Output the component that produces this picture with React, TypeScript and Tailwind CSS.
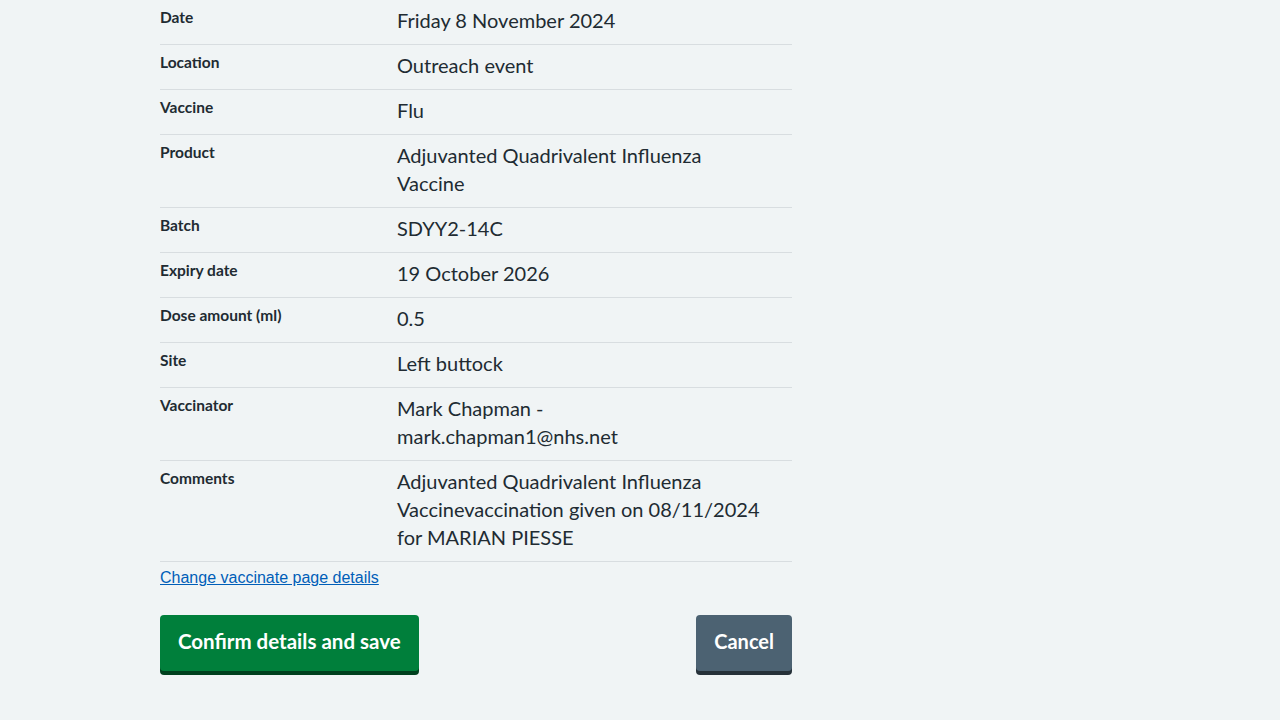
const rows: { key: string; value: string[] }[] = [
  { key: "Date", value: ["Friday 8 November 2024"] },
  { key: "Location", value: ["Outreach event"] },
  { key: "Vaccine", value: ["Flu"] },
  { key: "Product", value: ["Adjuvanted Quadrivalent Influenza", "Vaccine"] },
  { key: "Batch", value: ["SDYY2-14C"] },
  { key: "Expiry date", value: ["19 October 2026"] },
  { key: "Dose amount (ml)", value: ["0.5"] },
  { key: "Site", value: ["Left buttock"] },
  { key: "Vaccinator", value: ["Mark Chapman -", "mark.chapman1@nhs.net"] },
  {
    key: "Comments",
    value: [
      "Adjuvanted Quadrivalent Influenza",
      "Vaccinevaccination given on 08/11/2024",
      "for MARIAN PIESSE",
    ],
  },
];

export default function App() {
  return (
    <div className="min-h-[720px] bg-[#f0f4f5] text-[#212b32] font-['Lato',sans-serif]">
      <div className="ml-[160px] w-[632px]">
        <dl>
          {rows.map((r) => (
            <div key={r.key} className="flex border-b border-[#d8dde0] pt-1.5 pb-2.5">
              <dt className="mt-px w-[237px] shrink-0 text-[15.5px] leading-5 font-bold">{r.key}</dt>
              <dd className="w-[390px] text-[20px] leading-7">
                {r.value.map((line, i) => (
                  <div key={i}>{line}</div>
                ))}
              </dd>
            </div>
          ))}
        </dl>
        <a
          href="#"
          className="mt-1 block w-fit font-['Liberation_Sans',Arial,sans-serif] text-[16px] leading-6 text-[#005eb8] underline"
        >
          Change vaccinate page details
        </a>
        <div className="mt-[25px] flex justify-between">
          <button className="rounded-[4px] border-2 border-transparent bg-[#007f3b] px-4 pt-[10px] pb-[14px] text-[20.5px] leading-7 font-bold text-white shadow-[0_4px_0_#00401e]">
            Confirm details and save
          </button>
          <button className="rounded-[4px] border-2 border-transparent bg-[#4c6272] px-4 pt-[10px] pb-[14px] text-[20px] leading-7 font-bold text-white shadow-[0_4px_0_#263139]">
            Cancel
          </button>
        </div>
      </div>
    </div>
  );
}
